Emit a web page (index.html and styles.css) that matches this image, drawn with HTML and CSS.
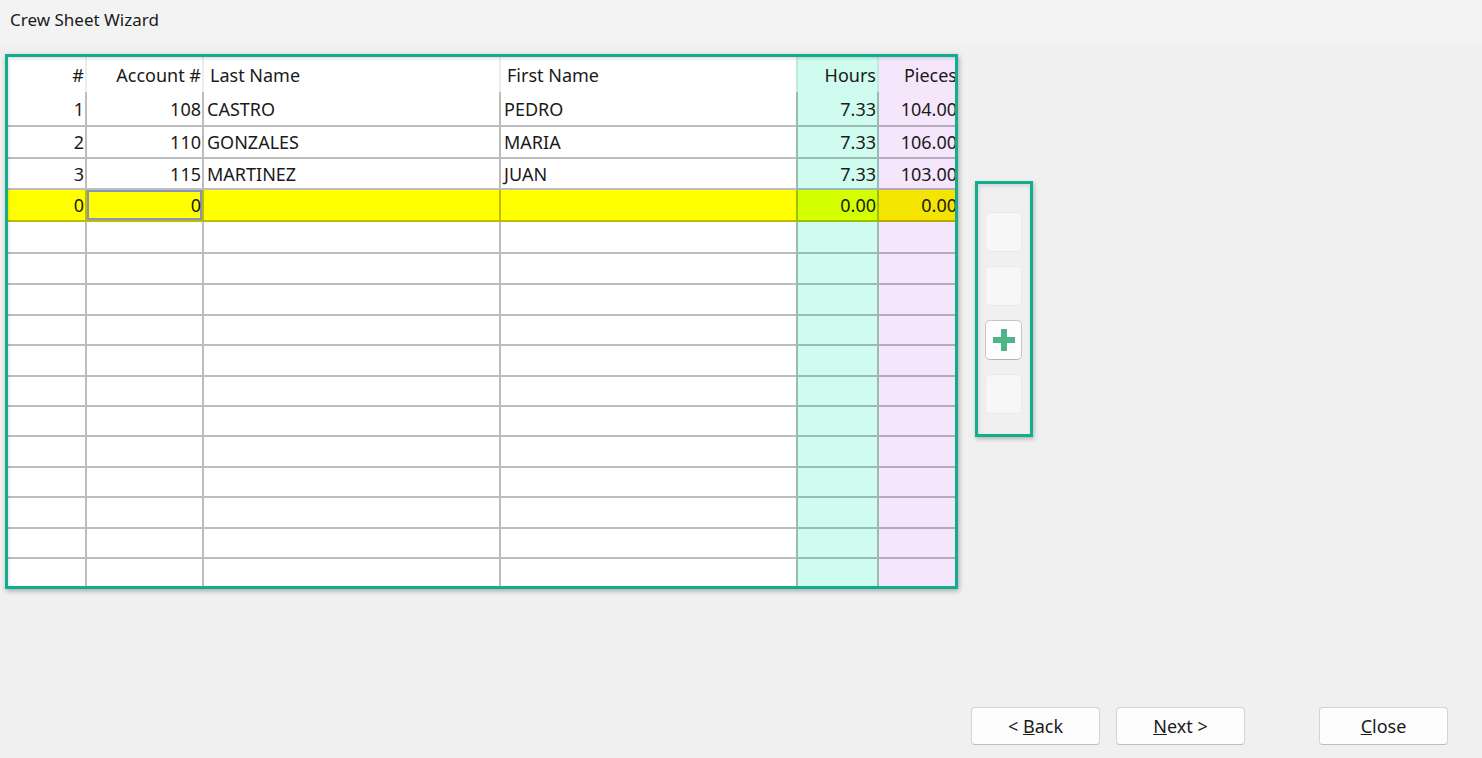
FILE: index.html
```html
<!DOCTYPE html>
<html lang="en">
<head>
    <meta charset="UTF-8">
    <title>Crew Sheet Wizard</title>
    <link rel="stylesheet" href="styles.css">
</head>
<body>
    <div class="title-bar">Crew Sheet Wizard</div>

    <div class="main">
        <div class="sheet-frame">
            <div class="sheet">
                <div class="row head">
                    <div class="right">#</div>
                    <div class="right">Account #</div>
                    <div class="left">Last Name</div>
                    <div class="left">First Name</div>
                    <div class="right">Hours</div>
                    <div class="right">Pieces</div>
                </div>
                <div class="row">
                    <div class="right">1</div>
                    <div class="right">108</div>
                    <div class="left">CASTRO</div>
                    <div class="left">PEDRO</div>
                    <div class="right">7.33</div>
                    <div class="right">104.00</div>
                </div>
                <div class="row">
                    <div class="right">2</div>
                    <div class="right">110</div>
                    <div class="left">GONZALES</div>
                    <div class="left">MARIA</div>
                    <div class="right">7.33</div>
                    <div class="right">106.00</div>
                </div>
                <div class="row">
                    <div class="right">3</div>
                    <div class="right">115</div>
                    <div class="left">MARTINEZ</div>
                    <div class="left">JUAN</div>
                    <div class="right">7.33</div>
                    <div class="right">103.00</div>
                </div>
                <div class="row current">
                    <div class="right">0</div>
                    <div class="right focused">0</div>
                    <div class="left"></div>
                    <div class="left"></div>
                    <div class="right">0.00</div>
                    <div class="right">0.00</div>
                </div>
                <div class="row"><div></div><div></div><div></div><div></div><div></div><div></div></div>
                <div class="row"><div></div><div></div><div></div><div></div><div></div><div></div></div>
                <div class="row"><div></div><div></div><div></div><div></div><div></div><div></div></div>
                <div class="row"><div></div><div></div><div></div><div></div><div></div><div></div></div>
                <div class="row"><div></div><div></div><div></div><div></div><div></div><div></div></div>
                <div class="row"><div></div><div></div><div></div><div></div><div></div><div></div></div>
                <div class="row"><div></div><div></div><div></div><div></div><div></div><div></div></div>
                <div class="row"><div></div><div></div><div></div><div></div><div></div><div></div></div>
                <div class="row"><div></div><div></div><div></div><div></div><div></div><div></div></div>
                <div class="row"><div></div><div></div><div></div><div></div><div></div><div></div></div>
                <div class="row"><div></div><div></div><div></div><div></div><div></div><div></div></div>
                <div class="row"><div></div><div></div><div></div><div></div><div></div><div></div></div>
            </div>
        </div>

        <div class="tool-panel">
            <button class="tool-btn" disabled></button>
            <button class="tool-btn" disabled></button>
            <button class="tool-btn" title="Add">
                <svg width="22" height="22" viewBox="0 0 22 22">
                    <path d="M8 0h6v8h8v6h-8v8H8v-8H0V8h8z" fill="#4fb487"/>
                </svg>
            </button>
            <button class="tool-btn" disabled></button>
        </div>
    </div>

    <div class="footer">
        <button class="wiz-btn">&lt; <u>B</u>ack</button>
        <button class="wiz-btn"><u>N</u>ext &gt;</button>
        <button class="wiz-btn close-btn"><u>C</u>lose</button>
    </div>
</body>
</html>
```

FILE: styles.css
```css
* {
    margin: 0;
    padding: 0;
    box-sizing: border-box;
}

body {
    font-family: 'Noto Sans', 'Open Sans', sans-serif;
    font-size: 18px;
    color: #1a1a1a;
    background: #f0f0f0;
    width: 1482px;
    height: 758px;
    display: flex;
    flex-direction: column;
    overflow: hidden;
}

.title-bar {
    height: 44px;
    background: #f3f3f3;
    padding: 6px 0 0 10px;
    line-height: 28px;
    font-size: 17px;
}

.main {
    display: flex;
    align-items: flex-start;
    padding: 10px 0 0 5px;
}

/* grid */

.sheet-frame {
    width: 953px;
    height: 535px;
    border: 3px solid #10ae8e;
    background: #fff;
    box-shadow: 1px 2px 5px rgba(0, 0, 0, 0.3);
    overflow: hidden;
    position: relative;
}

.sheet-frame::after {
    content: '';
    position: absolute;
    inset: 0;
    box-shadow: inset 1px 2px 3px rgba(0, 0, 0, 0.12);
    pointer-events: none;
}

.sheet {
    display: grid;
    grid-template-rows: 35px 35px 32px 31px 32px 32px 31px 31px 30px 31px 30px 30px 31px 30px 31px 30px 30px;
    width: 950px;
}

.row {
    display: grid;
    grid-template-columns: 79px 117px 297px 295px 83px 79px;
}

.row > div {
    display: flex;
    align-items: center;
    white-space: nowrap;
    overflow: hidden;
    border-bottom: 2px solid rgba(0, 0, 0, 0.26);
    border-right: 2px solid rgba(0, 0, 0, 0.26);
}

.row > div:nth-child(4),
.row > div:nth-child(6) {
    border-right: none;
}

.row > div:nth-child(5) {
    background: #d0fcf0;
    border-left: 2px solid rgba(0, 0, 0, 0.26);
}

.row > div:nth-child(6) {
    background: #f5e6fc;
}

.row.head > div {
    border-bottom: none;
    border-color: rgba(0, 0, 0, 0.07);
}

.right {
    justify-content: flex-end;
    padding-right: 1px;
}

.left {
    padding-left: 3px;
}

.head .left {
    padding-left: 6px;
}

.row.current > div {
    background: #ffff00;
}

.row.current > div:nth-child(5) {
    background: #d4ff00;
}

.row.current > div:nth-child(6) {
    background: #f5e400;
}

.focused {
    box-shadow: inset 0 0 0 2px #8793ba;
}

/* side toolbar */

.tool-panel {
    margin: 127px 0 0 17px;
    width: 58px;
    height: 256px;
    border: 3px solid #10ae8e;
    box-shadow: 1px 2px 4px rgba(0, 0, 0, 0.25), inset 1px 2px 4px rgba(0, 0, 0, 0.12);
    display: flex;
    flex-direction: column;
    gap: 14px;
    padding: 28px 0 0 7px;
}

.tool-btn {
    width: 37px;
    height: 40px;
    border: 1px solid #c6c6c6;
    border-bottom-color: #b4b4b4;
    border-radius: 5px;
    background: #fdfdfd;
    display: flex;
    align-items: center;
    justify-content: center;
}

.tool-btn:disabled {
    background: #f7f7f7;
    border-color: #e9e9e9;
}

/* wizard buttons */

.footer {
    margin-top: auto;
    display: flex;
    justify-content: flex-end;
    gap: 16px;
    padding: 0 34px 13px 0;
}

.wiz-btn {
    width: 129px;
    height: 38px;
    font-family: inherit;
    font-size: 18px;
    color: #1a1a1a;
    background: #fdfdfd;
    border: 1px solid #d3d3d3;
    border-bottom-color: #bdbdbd;
    border-radius: 4px;
}

.close-btn {
    margin-left: 58px;
}
```
